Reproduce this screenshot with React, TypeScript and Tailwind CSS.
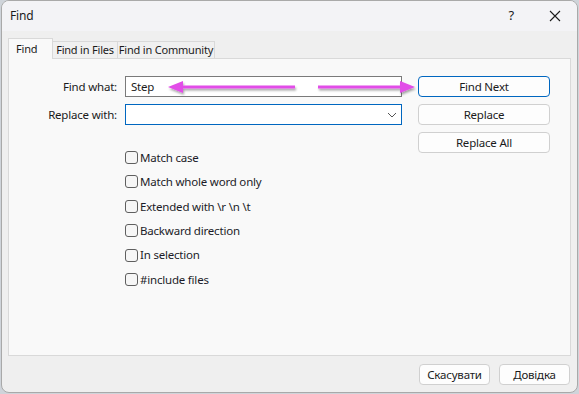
import React from 'react';

const font = { fontFamily: '"Noto Sans", "Open Sans", sans-serif' };

const options = [
    'Match case',
    'Match whole word only',
    'Extended with \\r \\n \\t',
    'Backward direction',
    'In selection',
    '#include files',
];

function Checkbox({ label }: { label: string }) {
    return (
        <label className="flex items-center h-[13px] gap-[2px] text-[11.5px] text-[#1c1c28]">
            <span className="w-[13px] h-[13px] rounded-[3px] border border-[#5f5f5f] bg-[#f6f6f6] shrink-0" />
            <span className="whitespace-pre">{label}</span>
        </label>
    );
}

function DialogButton({ children, primary }: { children: React.ReactNode; primary?: boolean }) {
    return (
        <button
            className={`h-[21px] w-full rounded-[4px] border bg-[#fdfdfd] text-[11.5px] text-[#1b1b1b] leading-none ${primary ? 'border-[#0067c0]' : 'border-[#d0d0d0]'}`}
        >
            {children}
        </button>
    );
}

export default function App() {
    return (
        <div className="w-[579px] h-[394px] bg-[#cfd4da] relative overflow-hidden tracking-[-0.2px]" style={font}>
            <div className="absolute left-[1px] top-0 w-[577px] h-[393px] rounded-[8px] border border-[#a9a9a9] bg-[#efefef] overflow-hidden flex flex-col">
                {/* Title bar */}
                <div className="h-[30px] bg-[#f3f3f6] flex items-center pl-[8px] shrink-0">
                    <span className="text-[12px] text-[#1b1b1b]">Find</span>
                    <span className="ml-auto text-[13px] text-[#1b1b1b] mr-[35px]">?</span>
                    <svg width="12" height="12" viewBox="0 0 12 12" className="mr-[16px]">
                        <path d="M1 1 L11 11 M11 1 L1 11" stroke="#1b1b1b" strokeWidth="1.1" />
                    </svg>
                </div>

                {/* Tabs */}
                <div className="flex items-end pl-[6px] h-[27px] shrink-0 text-[11px] text-[#1b1b1b] whitespace-nowrap">
                    <div className="h-[21px] pl-[7px] w-[45px] bg-[#f9f9f9] border border-b-0 border-[#d9d9d9] flex items-center relative top-[1px] z-10">
                        Find
                    </div>
                    <div className="h-[17px] w-[65px] bg-[#f0f0f0] border border-b-0 border-l-0 border-[#d9d9d9] flex items-center justify-center">
                        Find in Files
                    </div>
                    <div className="h-[17px] w-[97px] bg-[#f0f0f0] border border-b-0 border-l-0 border-[#d9d9d9] flex items-center justify-center">
                        Find in Community
                    </div>
                </div>

                {/* Panel */}
                <div className="ml-[6px] w-[563px] h-[298px] bg-[#f9f9f9] border border-[#d9d9d9] relative shrink-0">
                    <div className="flex pt-[17px]">
                        <div className="flex flex-col">
                            <div className="grid grid-cols-[108px_277px] gap-x-[8px] gap-y-[7px] items-center text-[11.5px] text-[#1b1b1b]">
                                <span className="text-right">Find what:</span>
                                <div className="h-[21px] border border-[#7a7a7a] bg-white flex items-center px-[5px]">Step</div>
                                <span className="text-right">Replace with:</span>
                                <div className="h-[21px] border border-[#0067c0] bg-white flex items-center justify-end pr-[4px]">
                                    <svg width="10" height="6" viewBox="0 0 10 6">
                                        <path d="M1 1 L5 5 L9 1" stroke="#555" strokeWidth="1" fill="none" />
                                    </svg>
                                </div>
                            </div>
                            <div className="ml-[116px] mt-[26px] flex flex-col gap-[11.4px]">
                                {options.map((o) => (
                                    <Checkbox key={o} label={o} />
                                ))}
                            </div>
                        </div>
                        <div className="ml-[16px] w-[132px] flex flex-col gap-[7px]">
                            <DialogButton primary>Find Next</DialogButton>
                            <DialogButton>Replace</DialogButton>
                            <DialogButton>Replace All</DialogButton>
                        </div>
                    </div>

                    {/* Annotation arrows */}
                    <svg className="absolute left-0 top-0 pointer-events-none" width="563" height="60">
                        <defs>
                            <filter id="sh" x="-10%" y="-100%" width="120%" height="400%">
                                <feDropShadow dx="1" dy="2" stdDeviation="1.2" floodColor="#000" floodOpacity="0.35" />
                            </filter>
                        </defs>
                        <g filter="url(#sh)" fill="#e24ee8" stroke="#e24ee8">
                            <path d="M286 28 L172 28" strokeWidth="3" />
                            <path d="M159 28 L174 22 L174 34 Z" stroke="none" />
                            <path d="M309 28 L393 28" strokeWidth="3" />
                            <path d="M406 28 L391 22 L391 34 Z" stroke="none" />
                        </g>
                    </svg>
                </div>

                {/* Footer */}
                <div className="flex justify-end gap-[9px] pr-[7px] pt-[8px]">
                    <button className="h-[21px] w-[71px] rounded-[4px] border border-[#d0d0d0] bg-[#fdfdfd] text-[11.5px] text-[#1b1b1b]">
                        Скасувати
                    </button>
                    <button className="h-[21px] w-[71px] rounded-[4px] border border-[#d0d0d0] bg-[#fdfdfd] text-[11.5px] text-[#1b1b1b]">
                        Довідка
                    </button>
                </div>
            </div>
        </div>
    );
}
